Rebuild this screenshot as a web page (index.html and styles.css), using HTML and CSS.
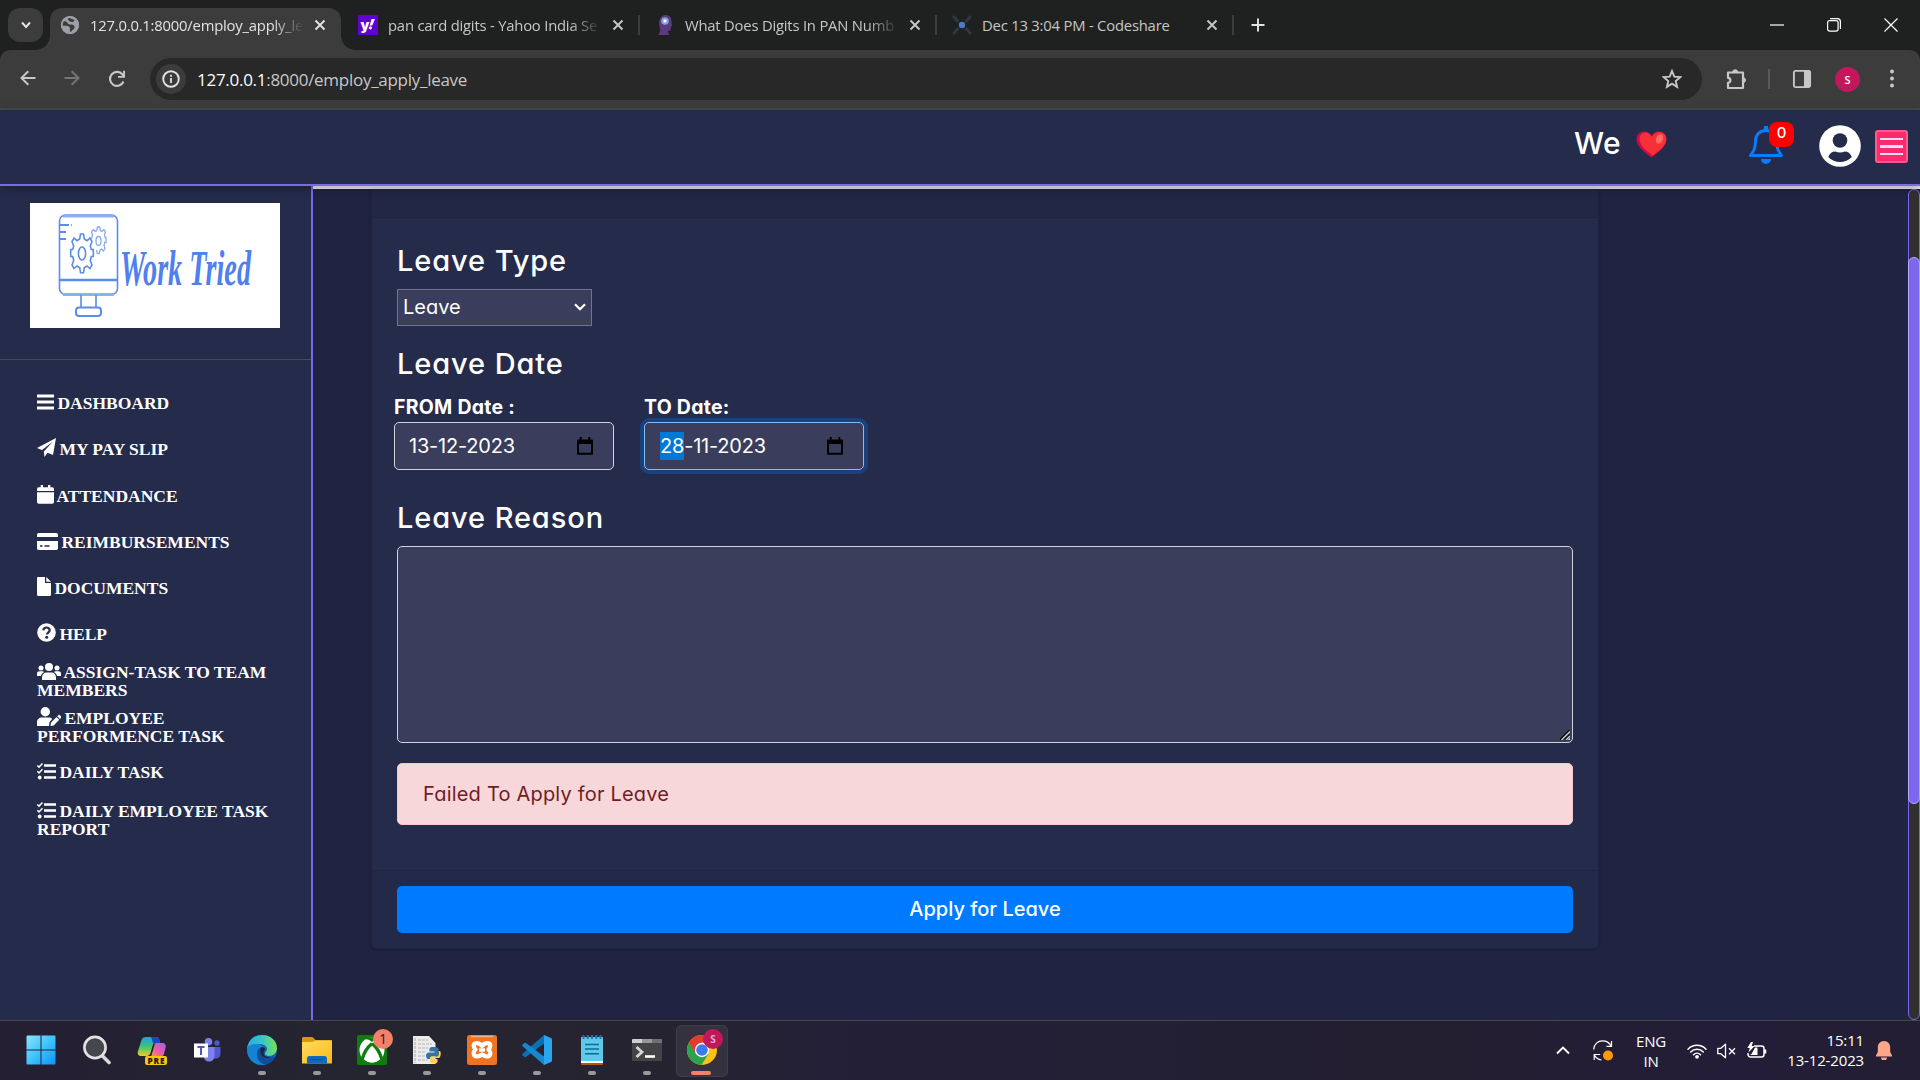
FILE: index.html
```html
<!DOCTYPE html>
<html lang="en">
<head>
<meta charset="utf-8">
<title>Apply for Leave</title>
<link rel="stylesheet" href="styles.css">
</head>
<body>
<header class="browser">
  <div class="tabstrip">
    <div class="tab-search"><svg width="12" height="12" viewBox="0 0 12 12"><path d="M2 3.500l4 4.500 4-4.500" fill="none" stroke="#e3e3e3" stroke-width="2"/></svg></div>
    <div class="tab active">
      <svg class="fav" width="20" height="20" viewBox="0 0 20 20"><circle cx="10" cy="10" r="9" fill="#9aa0a6"/><path d="M3 6.500c2-.5 4 0 4.500 1.500s2 1.500 4 1.500c2 0 3.500 1.500 3 3.500-.5 1.500-2 1.500-3 3.500l-1 .5c-1.500-2 .5-4-1.500-5.500-2-1-6 .5-7-2zM9 3c2 0 3 1.500 5 1.500 1 1 0 2.500-2 2.500s-3-1.500-4.500-2.500z" fill="#3c3c3c"/><circle cx="10" cy="10" r="8.200" fill="none" stroke="#9aa0a6" stroke-width="1.800"/></svg>
      <span class="tab-title fade">127.0.0.1:8000/employ_apply_le</span>
      <svg class="close" width="12" height="12" viewBox="0 0 12 12"><path d="M1.500 1.500l9 9M10.500 1.500l-9 9" stroke="#e3e3e3" stroke-width="1.900"/></svg>
    </div>
    <div class="tab">
      <svg class="fav" width="20" height="20" viewBox="0 0 20 20"><rect width="20" height="20" fill="#5f01d1"/><text x="2.500" y="15" font-family="Inter" font-weight="900" font-size="14" fill="#fff">y</text><path d="M13.500 4h3.500l-2.700 6.500h-2.600z" fill="#fff"/><circle cx="12.300" cy="12.800" r="1.600" fill="#fff"/></svg>
      <span class="tab-title fade">pan card digits - Yahoo India Se</span>
      <svg class="close" width="12" height="12" viewBox="0 0 12 12"><path d="M1.500 1.500l9 9M10.500 1.500l-9 9" stroke="#c7c7c7" stroke-width="1.900"/></svg>
    </div>
    <div class="tab sep">
      <svg class="fav" width="20" height="20" viewBox="0 0 20 20"><path d="M3 20c2-3 3-5 1.500-8C3 5 6 0 10.500 0S17 3 16.500 8l.8 3-1.300.5-.3 4-3 .5 1.500 4z" fill="#5b3a80"/><circle cx="10" cy="6" r="3.800" fill="#7fa3d8"/><circle cx="10" cy="6" r="1.700" fill="#e8f4ff"/></svg>
      <span class="tab-title fade">What Does Digits In PAN Numb</span>
      <svg class="close" width="12" height="12" viewBox="0 0 12 12"><path d="M1.500 1.500l9 9M10.500 1.500l-9 9" stroke="#c7c7c7" stroke-width="1.900"/></svg>
    </div>
    <div class="tab sep">
      <svg class="fav" width="20" height="20" viewBox="0 0 20 20"><path d="M2 2l3.500 4M18 2l-3.500 4M2 18l3.500-4M18 18l-3.500-4" stroke="#30353f" stroke-width="3.200" stroke-linecap="round"/><circle cx="10" cy="10" r="3.200" fill="#4b78c8"/></svg>
      <span class="tab-title">Dec 13 3:04 PM - Codeshare</span>
      <svg class="close" width="12" height="12" viewBox="0 0 12 12"><path d="M1.500 1.500l9 9M10.500 1.500l-9 9" stroke="#c7c7c7" stroke-width="1.900"/></svg>
    </div>
    <div class="newtab"><svg width="14" height="14" viewBox="0 0 14 14"><path d="M7 .5v13M.5 7h13" stroke="#e3e3e3" stroke-width="1.900"/></svg></div>
    <div class="winctl">
      <svg width="14" height="14" viewBox="0 0 14 14"><path d="M0 7h14" stroke="#fff" stroke-width="1.200"/></svg>
      <svg width="14" height="14" viewBox="0 0 14 14"><rect x=".6" y="2.600" width="10.500" height="10.500" rx="2" fill="none" stroke="#fff" stroke-width="1.200"/><path d="M3 .6h7.500a3 3 0 0 1 2.900 3V11" fill="none" stroke="#fff" stroke-width="1.200"/></svg>
      <svg width="14" height="14" viewBox="0 0 14 14"><path d="M.5.5l13 13M13.500.5l-13 13" stroke="#fff" stroke-width="1.200"/></svg>
    </div>
  </div>
  <div class="toolbar">
    <div class="navbtns">
      <svg width="16" height="16" viewBox="0 0 16 16"><path d="M15.500 8H2M8.300 1.200L1.500 8l6.800 6.800" fill="none" stroke="#c7c7c7" stroke-width="2"/></svg>
      <svg width="16" height="16" viewBox="0 0 16 16"><path d="M.5 8H14M7.700 1.200L14.500 8l-6.800 6.800" fill="none" stroke="#757575" stroke-width="2"/></svg>
      <svg width="18" height="18" viewBox="0 0 18 18"><path d="M15.500 11.500A7 7 0 1 1 14.500 4.500L16 6.500" fill="none" stroke="#c7c7c7" stroke-width="2.100"/><path d="M17 .8v7h-7V5.900h5.100V.8z" fill="#c7c7c7"/></svg>
    </div>
    <div class="omnibox">
      <span class="info"><svg width="18" height="18" viewBox="0 0 18 18"><circle cx="9" cy="9" r="7.800" fill="none" stroke="#e3e3e3" stroke-width="1.900"/><path d="M9 8v5M9 4.800v1.900" stroke="#e3e3e3" stroke-width="1.800"/></svg></span>
      <span class="url">127.0.0.1<i>:8000/employ_apply_leave</i></span>
      <svg class="star" width="20" height="20" viewBox="0 0 20 20"><path d="M10 2l2.300 5.600 6 .5-4.600 3.900 1.400 5.900L10 14.700l-5.100 3.200L6.300 12 1.700 8.100l6-.5z" fill="none" stroke="#c7c7c7" stroke-width="1.900"/></svg>
    </div>
    <svg class="puzzle" width="22" height="22" viewBox="0 0 22 22"><path d="M3 4.500h15V20H3v-5.200c3.200-.4 3.200-4.700 0-5z" fill="none" stroke="#c7c7c7" stroke-width="2.200" stroke-linejoin="round"/><path d="M7.700 4.200a2.500 2.500 0 0 1 5 0zM18.500 9.500a2.700 2.700 0 0 1 0 5.200z" fill="#c7c7c7" stroke="#c7c7c7"/></svg>
    <span class="tsep"></span>
    <svg class="panel" width="20" height="20" viewBox="0 0 20 20"><rect x="1.900" y="1.900" width="16.200" height="16.200" rx="1.500" fill="none" stroke="#c7c7c7" stroke-width="1.900"/><path d="M12 2h6.500v16H12z" fill="#c7c7c7"/></svg>
    <span class="avatar">S</span>
    <svg class="dots" width="6" height="20" viewBox="0 0 6 20"><circle cx="3" cy="2.500" r="2" fill="#c7c7c7"/><circle cx="3" cy="9.500" r="2" fill="#c7c7c7"/><circle cx="3" cy="16.500" r="2" fill="#c7c7c7"/></svg>
  </div>
</header>

<nav class="navbar">
  <span class="we">We</span>
  <svg class="heart" width="31" height="27" viewBox="0 0 31 27"><path d="M15.500 26.500C8 21 .5 15 .5 8.200.5 3.500 4 .5 8 .5c3.300 0 6 1.800 7.500 4.300C17 2.300 19.700.5 23 .5c4 0 7.500 3 7.500 7.700 0 6.800-7.500 12.800-15 18.300z" fill="#ca0b4a"/><path d="M16.500 24.500C10 19.500 3.500 14.500 3.500 8c0-4.300 3-6.500 6-6.500s5.300 2 6.500 4.600C17.200 3.500 20 1 23.300 1c4 0 7 3 7 7.200 0 6.300-7 11.500-13.800 16.300z" fill="#f92f38"/><ellipse cx="23.500" cy="8" rx="3.300" ry="5" transform="rotate(25 23.500 8)" fill="#ff6a62"/></svg>
  <div class="bell">
    <svg width="34" height="38" viewBox="0 0 34 38"><path d="M17 4.500C10.500 4.500 6.500 9 6.500 15c0 7.500-2 10.500-5 14.500h31c-3-4-5-7-5-14.500 0-6-4-10.500-10.500-10.500z" fill="none" stroke="#0a7cff" stroke-width="2.900" stroke-linejoin="round"/><path d="M14.800 1.500a2 2 0 0 1 4.400 0V5h-4.400zM12 33h10a5 5 0 0 1-10 0z" fill="#0a7cff"/></svg>
    <span class="badge">0</span>
  </div>
  <svg class="user" width="42" height="42" viewBox="0 0 42 42"><circle cx="21" cy="21" r="20.800" fill="#fff"/><circle cx="21" cy="15.500" r="7.300" fill="#252b4b"/><path d="M9.300 32c1.500-3.800 4-5.500 7-5.500 3 1.200 6.500 1.200 9.500 0 3 0 5.500 1.700 7 5.500a16.300 16.300 0 0 1-23.500 0z" fill="#252b4b"/></svg>
  <span class="burger"><i></i><i></i><i></i></span>
</nav>

<div class="page">
  <aside class="sidebar">
    <div class="brand">
      <svg width="250" height="125" viewBox="0 0 250 125"><rect width="250" height="125" fill="#fff"/>
        <g fill="none" stroke="#5b8ce8" stroke-width="1.600"><rect x="29.500" y="12" width="58" height="79.500" rx="6"/><path d="M33 13h51M33 91.500h51" stroke-width="3" stroke="#8fb0ee"/><path d="M30 77h57" stroke-width="2.400"/><path d="M30 22h9M30 29h6M30 36h6" stroke-width="2.200"/><path d="M41 22h1"/><path d="M51 92v13M66 92v13"/><rect x="46" y="104.500" width="25" height="8.500" rx="3" stroke-width="2"/>
        <ellipse cx="52" cy="50.500" rx="3.600" ry="6.500"/><path d="M50.500 31h3l.8 5 2.700 1.700 3-2.700 2 3.500-1.700 4.500 1 3.500h2v7h-2l-1 4 1.700 4.500-2 3.500-3-2.500-2.700 1.700-.8 5h-3l-.8-5-2.700-1.700-3 2.500-2-3.500 1.700-4.500-1-4h-2v-7h2l1-3.500-1.700-4.500 2-3.500 3 2.700 2.700-1.700z"/>
        <g stroke="#8aabf0" stroke-width="1.300"><ellipse cx="68.500" cy="38" rx="2.500" ry="4.500"/><path d="M61.500 36l1-4-1-3 1.800-2.500 2 2 1.500-1 .7-3.500h2.200l.7 3.500 1.500 1 2-2 1.500 2.500-1 3 .8 2.500H76v5h-1.300l-.7 3 1 3-1.500 2.500-2-2-1.500 1-.7 3.500h-2l-.8-3.500"/></g></g>
        <text class="logo-text" x="90" y="82" textLength="131" lengthAdjust="spacingAndGlyphs">Work Tried</text></svg>
    </div>
    <ul class="menu">
      <li><svg width="17" height="18" viewBox="0 0 17 18"><path d="M0 3h17M0 9h17M0 15h17" stroke="#fff" stroke-width="2.800"/></svg> DASHBOARD</li>
      <li><svg width="19" height="19" viewBox="0 0 19 19"><path d="M19 0l-3 17-5.500-2.300L7.500 19l-.7-5.500L16 3.500 5 12 0 10z" fill="#fff"/></svg> MY PAY SLIP</li>
      <li><svg width="17" height="19" viewBox="0 0 17 19"><path d="M0 7.200h17V17a1.800 1.800 0 0 1-1.800 1.800H1.800A1.800 1.800 0 0 1 0 17zM0 6V4a1.700 1.700 0 0 1 1.700-1.700h2V0H6v2.300h5V0h2.300v2.300h2A1.700 1.700 0 0 1 17 4v2z" fill="#fff"/></svg> ATTENDANCE</li>
      <li><svg width="21" height="17" viewBox="0 0 21 17"><path d="M0 3V1.700C0 .8.800 0 1.700 0h17.600c.9 0 1.700.8 1.700 1.700V4H0zM0 8h21v7.300c0 .9-.8 1.700-1.700 1.700H1.700C.8 17 0 16.200 0 15.300z" fill="#fff"/><path d="M3 13h2.500M7.500 13h5" stroke="#252b4b" stroke-width="1.400"/></svg> REIMBURSEMENTS</li>
      <li><svg width="14" height="19" viewBox="0 0 14 19"><path d="M0 1.200C0 .5.500 0 1.200 0H8v6h6v11.800c0 .7-.5 1.200-1.200 1.200H1.200C.5 19 0 18.500 0 17.800zM9.300 0L14 4.800H9.300z" fill="#fff"/></svg> DOCUMENTS</li>
      <li><svg width="19" height="19" viewBox="0 0 19 19"><circle cx="9.500" cy="9.500" r="9.300" fill="#fff"/><path d="M6.300 7.300C6.500 5.500 7.800 4.500 9.500 4.500c1.900 0 3.200 1.100 3.200 2.700 0 2-2.500 2.200-2.700 4.300" fill="none" stroke="#252b4b" stroke-width="2.200"/><circle cx="9.700" cy="14.300" r="1.500" fill="#252b4b"/></svg> HELP</li>
      <li class="two"><svg width="24" height="17" viewBox="0 0 24 17"><g fill="#fff"><circle cx="12" cy="4" r="4"/><circle cx="4" cy="5" r="2.500"/><circle cx="20" cy="5" r="2.500"/><path d="M5 17v-2.500C5 11.500 7 9.500 9.500 9.500h5c2.500 0 4.500 2 4.500 5V17zM0 13v-2.500C0 9 1 8.200 2.500 8.200h3c.7 0 1.300.3 1.700.7C5.500 9.800 4.300 11.300 4 13zM24 13v-2.500c0-1.500-1-2.300-2.500-2.300h-3c-.7 0-1.300.3-1.700.7 1.700.9 2.900 2.400 3.200 4.100z"/></g></svg> ASSIGN-TASK TO TEAM<br>MEMBERS</li>
      <li class="two tight"><svg width="24" height="19" viewBox="0 0 24 19"><g fill="#fff"><circle cx="8.300" cy="4.700" r="4.700"/><path d="M0 19v-3.500c0-3 2-5 5-5h6.500c1.500 0 2.800.5 3.700 1.400L12.500 15 12 19zM13.500 19l.5-3.500 5.500-5.500 2.800 2.800-5.600 5.600zM20.300 9.200l1-1c.5-.5 1-.5 1.500 0L24 9.500c.4.4.4 1 0 1.400l-1 1z"/></g></svg> EMPLOYEE<br>PERFORMENCE TASK</li>
      <li class="daily"><svg width="19" height="17" viewBox="0 0 19 17"><path d="M7 2.500h12M7 8.500h12M7 14.500h12" stroke="#fff" stroke-width="2.400"/><path d="M.3 2.500l1.700 1.600L5.500.5M.3 8.300L2 9.900l3.500-3.600" fill="none" stroke="#fff" stroke-width="1.500"/><circle cx="2.700" cy="14.500" r="1.900" fill="#fff"/></svg> DAILY TASK</li>
      <li class="two last"><svg width="19" height="17" viewBox="0 0 19 17"><path d="M7 2.500h12M7 8.500h12M7 14.500h12" stroke="#fff" stroke-width="2.400"/><path d="M.3 2.500l1.700 1.600L5.500.5M.3 8.300L2 9.900l3.500-3.600" fill="none" stroke="#fff" stroke-width="1.500"/><circle cx="2.700" cy="14.500" r="1.900" fill="#fff"/></svg> DAILY EMPLOYEE TASK<br>REPORT</li>
    </ul>
  </aside>
  <main class="main">
    <div class="card">
      <div class="card-head"></div>
      <div class="card-body">
        <h2>Leave Type</h2>
        <div class="select"><span>Leave</span><svg width="12" height="8" viewBox="0 0 12 8"><path d="M1 1.200l5 5 5-5" fill="none" stroke="#fff" stroke-width="2.200"/></svg></div>
        <h2 class="h-date">Leave Date</h2>
        <div class="dates">
          <div class="field"><label>FROM Date :</label>
            <div class="date"><span>13-12-2023</span><svg width="16" height="18" viewBox="0 0 16 18"><path d="M1 3.500h14v13.300H1z" fill="none" stroke="#000" stroke-width="2" stroke-linejoin="round"/><path d="M1 3h14v4H1zM2.700 0h2v3h-2zM11.300 0h2v3h-2z" fill="#000"/></svg></div></div>
          <div class="field"><label>TO Date:</label>
            <div class="date focus"><span><em>28</em>-11-2023</span><svg width="16" height="18" viewBox="0 0 16 18"><path d="M1 3.500h14v13.300H1z" fill="none" stroke="#000" stroke-width="2" stroke-linejoin="round"/><path d="M1 3h14v4H1zM2.700 0h2v3h-2zM11.300 0h2v3h-2z" fill="#000"/></svg></div></div>
        </div>
        <h2 class="h-reason">Leave Reason</h2>
        <div class="textarea"><svg width="10" height="10" viewBox="0 0 10 10"><path d="M0 9.500L9.500 0M4.500 9.500l5-5" stroke="#111" stroke-width="1.600"/><path d="M1.500 10L10 1.500M6 10l4-4M8.500 10L10 8.500" stroke="#ccc" stroke-width="1.300"/></svg></div>
        <div class="alert">Failed To Apply for Leave</div>
      </div>
      <div class="card-foot"><div class="btn">Apply for Leave</div></div>
    </div>
    <div class="scroll"><div class="thumb"></div></div>
  </main>
</div>

<footer class="taskbar">
  <div class="apps">
    <div class="app"><svg width="30" height="30" viewBox="0 0 30 30"><defs><linearGradient id="w" x1="0" y1="0" x2="1" y2="1"><stop offset="0" stop-color="#8be3ff"/><stop offset=".5" stop-color="#3fc3fb"/><stop offset="1" stop-color="#0d93fb"/></linearGradient></defs><path d="M.5 1.500a1 1 0 0 1 1-1h13v14H.5zM15.500.5h13a1 1 0 0 1 1 1v13h-14zM.5 15.500h14v14h-13a1 1 0 0 1-1-1zM15.500 15.500h14v13a1 1 0 0 1-1 1h-13z" fill="url(#w)"/></svg></div>
    <div class="app"><svg width="30" height="30" viewBox="0 0 30 30"><path d="M19.500 20l7.500 7.500" stroke="#d8d8dc" stroke-width="3.600" stroke-linecap="round"/><circle cx="13" cy="12.500" r="10.600" fill="#46464f" stroke="#e2e2e4" stroke-width="2.600"/></svg></div>
    <div class="app"><svg width="30" height="30" viewBox="0 0 30 30"><defs><linearGradient id="c1" x1="0" y1="0" x2="0" y2="1"><stop offset="0" stop-color="#1a9df0"/><stop offset=".5" stop-color="#3dc66e"/><stop offset="1" stop-color="#e8cf2c"/></linearGradient><linearGradient id="c2" x1="1" y1="0" x2="0" y2="1"><stop offset="0" stop-color="#a45cf0"/><stop offset=".6" stop-color="#f0609a"/><stop offset="1" stop-color="#ff9a4e"/></linearGradient></defs><path d="M9 2h10c2 0 3 1.500 3.500 3.500L23 8h-4c-2 0-3 1-3.500 3l-2 7c-.7 2-2 3-4 3H4.500c-3 0-4.500-2-3.500-5L4.500 5C5.200 3 6.500 2 9 2z" fill="url(#c1)"/><path d="M14 2h5c2 0 3 1.500 3.500 3.500L23 8h-4c-1 0-2 .5-2.500 1z" fill="#1548c8"/><path d="M19 8h6c3 0 4.500 2 3.500 5L27 19c-.5 2-2 3-4 3h-9l3.500-12c.3-1 .8-2 1.500-2z" fill="url(#c2)"/><rect x="8" y="21" width="22" height="9" rx="2" fill="#fbc70b"/><text x="10.500" y="28.500" font-family="Open Sans" font-size="8.200" font-weight="800" fill="#222" textLength="17">PRE</text></svg></div>
    <div class="app"><svg width="28" height="24" viewBox="0 0 28 24"><circle cx="15.500" cy="3.800" r="3.800" fill="#7b83eb"/><circle cx="24" cy="5" r="2.700" fill="#5059c9"/><path d="M20 9h7.500v7c0 3-2.500 4.500-5 4.500h-2.500z" fill="#5059c9"/><path d="M11 9h10.500v8.500c0 4-2.500 6-5.500 6s-5-2-5-4z" fill="#7b83eb"/><rect x="1" y="5.500" width="14" height="14" fill="#fff"/><path d="M4.500 9h7M8 9v8" stroke="#4f57c6" stroke-width="2"/></svg></div>
    <div class="app run"><svg width="30" height="30" viewBox="0 0 30 30"><defs><linearGradient id="e1" x1="0" y1="0" x2="1" y2="0"><stop offset="0" stop-color="#2aa8e8"/><stop offset=".5" stop-color="#35c6c8"/><stop offset="1" stop-color="#7be057"/></linearGradient></defs><circle cx="15" cy="15" r="15" fill="#0c62b8"/><path d="M0 14C1 5 7 0 15 0c9 0 15 6 15 13 0 5-4 8-8 8-3 0-4-1-4-2.500S20 16 20 14c0-2.500-3-5-7.500-5C6 9 1 11 0 14z" fill="url(#e1)"/><path d="M0 14c1-3.500 6-5 10-5 3.500 0 6 1.500 6 3-4 .5-6 3.500-6 7 0 6 5 10 10 10-2 .8-3 1-5 1C6 30 0 23 0 14z" fill="#1583d4"/><path d="M10 19c0-3.500 1.500-5.500 4-6.500-1 5 2 10.500 7.500 10.500 3 0 5.500-1 6.500-1.500-2 4-5 7-9 8-5-.5-9-4.500-9-10.500z" fill="#0f4d96"/><path d="M14 12.500c2-.5 4 0 4 2 0 1.200-1.500 1.800-1.500 3.500 0 2.500 3 5 8 4-3 2-9 1-10.500-3-.8-2-.6-5 0-6.500z" fill="#232230"/></svg></div>
    <div class="app run"><svg width="30" height="27" viewBox="0 0 30 27"><defs><linearGradient id="f1" x1="0" y1="0" x2="1" y2="1"><stop offset="0" stop-color="#ffdc66"/><stop offset="1" stop-color="#fbb912"/></linearGradient></defs><path d="M0 1.500C0 .7.700 0 1.500 0h8c1 0 1.500.5 2.200 1.200L13.500 3H29c.6 0 1 .4 1 1v9H0z" fill="#d99806"/><path d="M0 5h10.500c1 0 1.500-1.500 3-1.500H29c.6 0 1 .4 1 1V26.500H0z" fill="url(#f1)"/><path d="M5 26.500V21.500a2.500 2.500 0 0 1 2.500-2.500h15a2.500 2.500 0 0 1 2.500 2.500v5z" fill="#0c6bc0"/><path d="M8.500 22.500h13" stroke="#07529c" stroke-width="1.200"/></svg></div>
    <div class="app run xbox"><svg width="30" height="30" viewBox="0 0 30 30"><rect width="30" height="30" rx="2" fill="#0f7c10"/><circle cx="15" cy="15" r="12.500" fill="#fff"/><path d="M15 8.500c3 2.500 8 8.500 9.500 15.500M15 8.500C12 11 7 17 5.500 24" fill="none" stroke="#0f7c10" stroke-width="3.400"/><path d="M7 4.500c3-1 6 .5 8 2.500 2-2 5-3.500 8-2.500-3-3-13-3-16 0z" fill="#0f7c10"/><path d="M15 12c3 2.500 6 7 8 12-4 4.500-12 4.500-16 0 2-5 5-9.500 8-12z" fill="#fff"/></svg><span class="count">1</span></div>
    <div class="app run"><svg width="28" height="29" viewBox="0 0 28 29"><path d="M0 0h16l6.500 7v21H0z" fill="#ececec"/><path d="M2 2v25M5 4h10M5 8h14M5 12h10M5 16h8M5 20h8M5 24h10" stroke="#b3b3b3" stroke-width="1.200" stroke-dasharray="3 1"/><path d="M19 11h3.500c2 0 3 1 3 2.500V18c0 1.500-1 2.500-2.500 2.500h-4c-1.500 0-2 1-2 2.500h-1.500c-2 0-2.500-2-2.500-3.500s1-3 3-3h5.500v-1h-5V13c0-1.300 1-2 2.500-2z" fill="#3572a5"/><path d="M25.700 15H27c1 1 1 4 0 6-.4.800-1 1-2 1h-4v1h3.500v2.500c0 1.500-1.500 2-3.500 2s-4-.5-4-2.500v-2.500c0-1.500 1-2 2.500-2h4c1.500 0 2.200-1.200 2.200-2.500z" fill="#fcd34a"/></svg></div>
    <div class="app run"><svg width="30" height="30" viewBox="0 0 30 30"><rect width="30" height="30" rx="2.500" fill="#ee7421"/><path d="M4 1.500h22" stroke="#f9b27c" stroke-width="1.500"/><g fill="none" stroke="#fff" stroke-width="4.200" stroke-linejoin="round"><path d="M8 8.500c3-1 5 0 7 2.500 2-2.500 4-3.500 7-2.500 2 1 1.500 4-.5 6 2.500 2.500 2.500 5 .5 6.500-3 1.200-5 0-7-1.500-2 1.500-4 2.700-7 1.500-2-1.500-2-4 .5-6.500-2-2-2.500-5-.5-6z"/></g><path d="M12 15h6" stroke="#fff" stroke-width="3.500"/></svg></div>
    <div class="app run"><svg width="30" height="30" viewBox="0 0 30 30"><path d="M22 0l7 3c.7.300 1 .8 1 1.500v21c0 .7-.3 1.200-1 1.500l-7 3z" fill="#2aa5ef"/><path d="M22 0v8.500L4 22c-.6.400-1 .4-1.500 0L.6 20.500c-.6-.6-.6-1.200 0-1.800z" fill="#0b6fb5"/><path d="M22 30v-8.500L4 8c-.6-.4-1-.4-1.500 0L.6 9.500c-.6.600-.6 1.200 0 1.800z" fill="#1688d0"/></svg></div>
    <div class="app run"><svg width="22" height="30" viewBox="0 0 22 30"><rect y="2" width="22" height="28" rx="1" fill="#b5560f"/><rect y="2" width="22" height="26" fill="#fff"/><rect y="2" width="22" height="24" fill="#60c8e8"/><path d="M4 9.500h14M4 14h14M4 18.800h14" stroke="#0b6d94" stroke-width="1.600"/><path d="M2.500 0v4M6.700 0v4M11 0v4M15.300 0v4M19.500 0v4" stroke="#0f7fae" stroke-width="2"/></svg></div>
    <div class="app run"><svg width="30" height="22" viewBox="0 0 30 22"><rect width="30" height="22" rx="1" fill="#444446"/><path d="M0 4V1a1 1 0 0 1 1-1h9v4z" fill="#cfcfd1"/><path d="M10 0h10v4H10z" fill="#98989a"/><path d="M20 0h9a1 1 0 0 1 1 1v3H20z" fill="#707072"/><path d="M4.500 8l5.500 5-5.500 5" fill="none" stroke="#d8d8da" stroke-width="2.800"/><path d="M13 17.500h10" stroke="#fff" stroke-width="2.600"/></svg></div>
    <div class="app run current"><svg width="30" height="30" viewBox="0 0 30 30"><circle cx="15" cy="15" r="15" fill="#fbc116"/><path d="M15 15L2 7.500A15 15 0 0 0 14.500 30L21.500 18.800z" fill="#2ba24c"/><path d="M2 7.500a15 15 0 0 1 26 0H15l-6.500 11.300z" fill="#e33b2e"/><circle cx="15" cy="15" r="7.200" fill="#fff"/><circle cx="15" cy="15" r="5.800" fill="#3a7cec"/></svg><span class="count s">S</span></div>
  </div>
  <div class="tray">
    <svg class="chev" width="14" height="9" viewBox="0 0 14 9"><path d="M1 7.500l6-6 6 6" fill="none" stroke="#fff" stroke-width="1.900"/></svg>
    <svg class="sync" width="20" height="21" viewBox="0 0 20 21"><path d="M.7 9.500C1 4 5 .8 9.500.8c4 0 7 2 8.500 5M18.500 1v5.300h-5M1.200 20v-5.500h6M1.500 15c1 2.500 4 4.500 7 5" fill="none" stroke="#fff" stroke-width="1.200"/><circle cx="15" cy="15.500" r="5" fill="#ff9b05"/></svg>
    <div class="lang"><span>ENG</span><span>IN</span></div>
    <svg class="wifi" width="20" height="16" viewBox="0 0 20 16"><g fill="none" stroke="#fff" stroke-width="1.500" stroke-linecap="round"><path d="M1 6.200a12.500 12.500 0 0 1 18 0M3.700 9a8.800 8.800 0 0 1 12.600 0M6.500 11.700a5 5 0 0 1 7 0"/></g><circle cx="10" cy="13.800" r="1.900" fill="#fff"/></svg>
    <svg class="spk" width="20" height="16" viewBox="0 0 20 16"><path d="M.8 5.300h3L8.500 1.200v13.600l-4.700-4.100h-3z" fill="none" stroke="#fff" stroke-width="1.300" stroke-linejoin="round"/><path d="M12 5.200l6 6M18 5.200l-6 6" stroke="#fff" stroke-width="1.300"/></svg>
    <svg class="bat" width="20" height="17" viewBox="0 0 20 17"><path d="M7 4h7.500a2.500 2.500 0 0 1 2.500 2.500v6a2.500 2.500 0 0 1-2.500 2.500h-11A2.500 2.500 0 0 1 1 12.500V11M18.500 7.500v4" fill="none" stroke="#fff" stroke-width="1.500"/><path d="M3 13l1.500-1L8 5.500h2.500V13zM4 0L.3 6h2.500L1.500 10.500 7.500 4H4.700L6 0z" fill="#fff"/></svg>
    <div class="clock"><span>15:11</span><span>13-12-2023</span></div>
    <svg class="tbell" width="16" height="19" viewBox="0 0 16 19"><path d="M8 0C4 0 1.800 3 1.800 6.500V11L0 14.500V15.500h16v-1L14.200 11V6.500C14.200 3 12 0 8 0zM5 16.500h6a3 3 0 0 1-6 0z" fill="#fda688"/></svg>
  </div>
</footer>
</body>
</html>
```
FILE: styles.css
```css
* { box-sizing: border-box; }
body {
  margin: 0;
  width: 1920px;
  height: 1080px;
  overflow: hidden;
  display: flex;
  flex-direction: column;
  background: #202442;
  color: #fff;
  font-family: Inter, "Open Sans", sans-serif;
}
svg { display: block; flex: none; }
i, em { font-style: normal; }

/* Browser chrome */
.browser { height: 110px; background: #1f2120; font-family: "Open Sans", "Noto Sans", sans-serif; }
.tabstrip { height: 50px; display: flex; align-items: center; padding-left: 8px; }
.tab-search { width: 35px; height: 34px; margin-right: 7px; border-radius: 12px; background: #3c3c3c; display: grid; place-items: center; }
.tab { width: 297px; height: 50px; display: flex; align-items: center; padding-left: 17px; color: #c7c7c7; position: relative; }
.tab.active { width: 291px; height: 42px; align-self: flex-end; padding: 0 0 8px 10px; border-radius: 12px 12px 0 0; background: #3c3c3c; color: #e3e3e3; }
.tab.active::before, .tab.active::after { content: ""; position: absolute; bottom: 0; width: 14px; height: 14px; }
.tab.active::before { left: -14px; background: radial-gradient(circle at 0 0, transparent 13.5px, #3c3c3c 14px); }
.tab.active::after { right: -14px; background: radial-gradient(circle at 100% 0, transparent 13.5px, #3c3c3c 14px); }
.tab.sep::before { content: ""; position: absolute; left: 0; top: 15px; width: 2px; height: 20px; background: #3c3c3c; }
.tab-title { width: 214px; margin-left: 10px; white-space: nowrap; font-size: 14.800px; letter-spacing: -.2px; line-height: 24px; }
.tab-title.fade { -webkit-mask-image: linear-gradient(90deg, #000 182px, transparent 214px); mask-image: linear-gradient(90deg, #000 182px, transparent 214px); }
.close { margin-left: 10px; }
.newtab { width: 44px; display: grid; place-items: center; padding-left: 5px; border-left: 2px solid #3c3c3c; height: 20px; }
.winctl { margin-left: auto; width: 128px; margin-right: 22px; display: flex; justify-content: space-between; }
.toolbar { height: 60px; display: flex; align-items: center; background: #3c3c3c; border-bottom: 2px solid #474b4d; border-radius: 10px 10px 0 0; }
.navbtns { width: 150px; display: flex; gap: 28px; padding-left: 20px; }
.omnibox { width: 1552px; height: 42px; border-radius: 21px; background: #282828; display: flex; align-items: center; padding-left: 6px; }
.info { width: 30px; height: 30px; border-radius: 50%; background: #3c3c3c; display: grid; place-items: center; }
.url { margin-left: 11px; font-size: 17px; letter-spacing: -.28px; color: #fff; }
.url i { color: #c7c7c7; }
.star { margin-left: auto; margin-right: 20px; }
.puzzle { margin-left: 23px; }
.tsep { width: 2px; height: 20px; margin-left: 21px; background: #5a5a5a; }
.panel { margin-left: 22px; }
.avatar { width: 25px; height: 25px; margin-left: 23px; border-radius: 50%; background: #c2185b; font-size: 11px; font-weight: 600; display: grid; place-items: center; }
.dots { margin-left: 29px; }

/* Site header */
.navbar { height: 76px; flex: none; display: flex; align-items: flex-start; background: #252b4b; border-bottom: 2px solid #7b68ee; position: relative; z-index: 2; box-shadow: 0 2px 10px rgba(0, 0, 0, .3); }
.we { width: 62px; margin: 15px 0 0 1574px; font-size: 30px; line-height: 36px; font-weight: 500; letter-spacing: .5px; }
.heart { margin-top: 21px; }
.bell { position: relative; margin: 16px 0 0 82px; }
.badge { position: absolute; left: 20px; top: -4px; width: 25px; height: 25px; border-radius: 8px; background: #f00; text-align: center; font-size: 15px; line-height: 22px; font-weight: 500; }
.user { margin: 15px 0 0 36px; }
.burger { width: 33px; height: 33px; margin: 20px 0 0 14px; border: 2px solid #ff5a8a; border-radius: 3px; background: #ff2a6d; display: flex; flex-direction: column; justify-content: space-between; padding: 6px 3px; }
.burger i { height: 2px; background: #e6dcf5; }
.burger i:nth-child(2) { height: 3px; }

.page { height: 834px; flex: none; display: flex; }

/* Sidebar */
.sidebar { width: 313px; background: #252b4b; border-right: 2px solid #7b68ee; }
.brand { height: 174px; padding: 17px 0 0 30px; border-bottom: 1px solid #444a5c; }
.logo-text { font-family: "Liberation Serif", serif; font-style: italic; font-weight: bold; font-size: 50px; fill: #5080ee; }
.menu { list-style: none; margin: 0; padding: 20px 0 0 37px; font: bold 17.500px/18px "Liberation Serif", serif; }
.menu li { height: 46.300px; line-height: 46px; white-space: nowrap; }
.menu svg { display: inline-block; vertical-align: -2px; margin-right: -1px; }
.menu li.two { line-height: 18px; padding-top: 5px; }
.menu li.tight { padding-top: 3px; }
.menu li.daily { line-height: 44px; }

/* Leave form */
.main { flex: 1; display: flex; justify-content: space-between; padding-left: 58px; border-top: 3px solid #ece8ec; }
.card { width: 1228px; height: 760px; border: 1px solid #1e2341; border-top: 0; border-radius: 0 0 5px 5px; background: #252b4b; box-shadow: 0 1px 3px rgba(0, 0, 0, .25); }
.card-head { height: 29px; background: #212745; border-bottom: 1px solid #1e2340; }
.card-body { height: 652px; padding: 24px 25px 0 25px; }
.card h2 { margin: 0; font-size: 29px; line-height: 37px; font-weight: 500; letter-spacing: .9px; }
.card h2, .select, .date, .field, .alert, .btn, .we { font-feature-settings: "cv11", "ss03"; }
.select { width: 195px; height: 37px; margin-top: 10px; border: 1px solid #767676; background: #3b3d5c; display: flex; align-items: center; justify-content: space-between; padding: 0 5px 1px; font-size: 20px; }
.card .h-date { margin-top: 19px; }
.dates { display: flex; gap: 30px; margin: 13px 0 0 -3px; }
.field { width: 220px; }
.field label { display: block; height: 24px; margin-bottom: 3px; font-size: 19.500px; line-height: 24px; font-weight: 700; letter-spacing: .27px; }
.date { height: 48px; border: 1px solid #ced4da; border-radius: 5px; background: #3b3d5c; display: flex; align-items: center; justify-content: space-between; padding: 0 20px 0 14px; font-size: 20px; letter-spacing: -.2px; }
.date.focus { border-color: #80bdff; box-shadow: 0 0 0 4px #1c4079; padding-left: 15px; }
.date em { background: #0078d7; padding: 2px 0; }
.card .h-reason { margin-top: 29px; }
.textarea { height: 197px; margin-top: 10px; border: 1px solid #ced4da; border-radius: 5px; background: #3b3d5c; display: flex; justify-content: flex-end; align-items: flex-end; padding: 2px; }
.alert { height: 62px; margin-top: 20px; border: 1px solid #f5c6cb; border-radius: 5px; background: #f8d7da; color: #721c24; font-size: 20px; letter-spacing: .2px; line-height: 60px; padding-left: 25px; }
.card-foot { border-top: 1px solid #1f2442; background: #232948; padding: 15px 25px; border-radius: 0 0 5px 5px; }
.btn { height: 47px; border-radius: 5px; background: #007bff; text-align: center; line-height: 47px; font-size: 20px; font-weight: 500; }
.scroll { width: 12px; border: 1px solid #7b68ee; border-radius: 6px; background: #303030; padding-top: 67px; }
.thumb { width: 12px; height: 547px; margin-left: -1px; border: 1px solid #b5a9f8; border-radius: 6px; background: #7b68ee; }

/* Taskbar */
.taskbar { height: 60px; flex: none; border-top: 1px solid #46464e; background: linear-gradient(90deg, #241f33 0, #252530 20%, #252330 35%, #231f38 45%, #231f30 75%, #231d38 90%, #231e33); display: flex; justify-content: space-between; font-family: "Open Sans", "Noto Sans", sans-serif; }
.apps { display: flex; padding: 4px 0 0 14px; }
.app { width: 55px; height: 50px; display: grid; place-items: center; position: relative; }
.app:first-child { padding-right: 2px; }
.app.run::after { content: ""; position: absolute; left: 24px; bottom: 0; width: 8px; height: 4px; border-radius: 2px; background: #9a9a9e; }
.app.current::before { content: ""; position: absolute; left: 2px; top: 0; width: 50px; height: 50px; border: 1px solid #3f3d4a; border-radius: 5px; background: #34323f; }
.app.current svg { position: relative; }
.app.current::after { left: 17px; width: 20px; background: #f4806a; }
.count { position: absolute; left: 29px; top: 4px; width: 20px; height: 20px; border-radius: 50%; background: #f4806a; color: #222; font-size: 14px; line-height: 20px; text-align: center; }
.count.s { background: #c2185b; color: #eaa9c4; font-size: 10px; font-weight: 700; }
.tray { display: flex; align-items: center; padding-right: 28px; font-size: 15px; letter-spacing: -.15px; line-height: 20px; }
.sync { margin-left: 23px; }
.lang { width: 34px; margin-left: 21px; text-align: center; display: flex; flex-direction: column; align-items: center; }
.wifi { margin-left: 19px; }
.spk { margin-left: 10px; }
.bat { margin-left: 10px; }
.clock { width: 80px; margin-left: 17px; padding-bottom: 2px; display: flex; flex-direction: column; align-items: flex-end; white-space: nowrap; }
.tbell { margin-left: 12px; }
```
